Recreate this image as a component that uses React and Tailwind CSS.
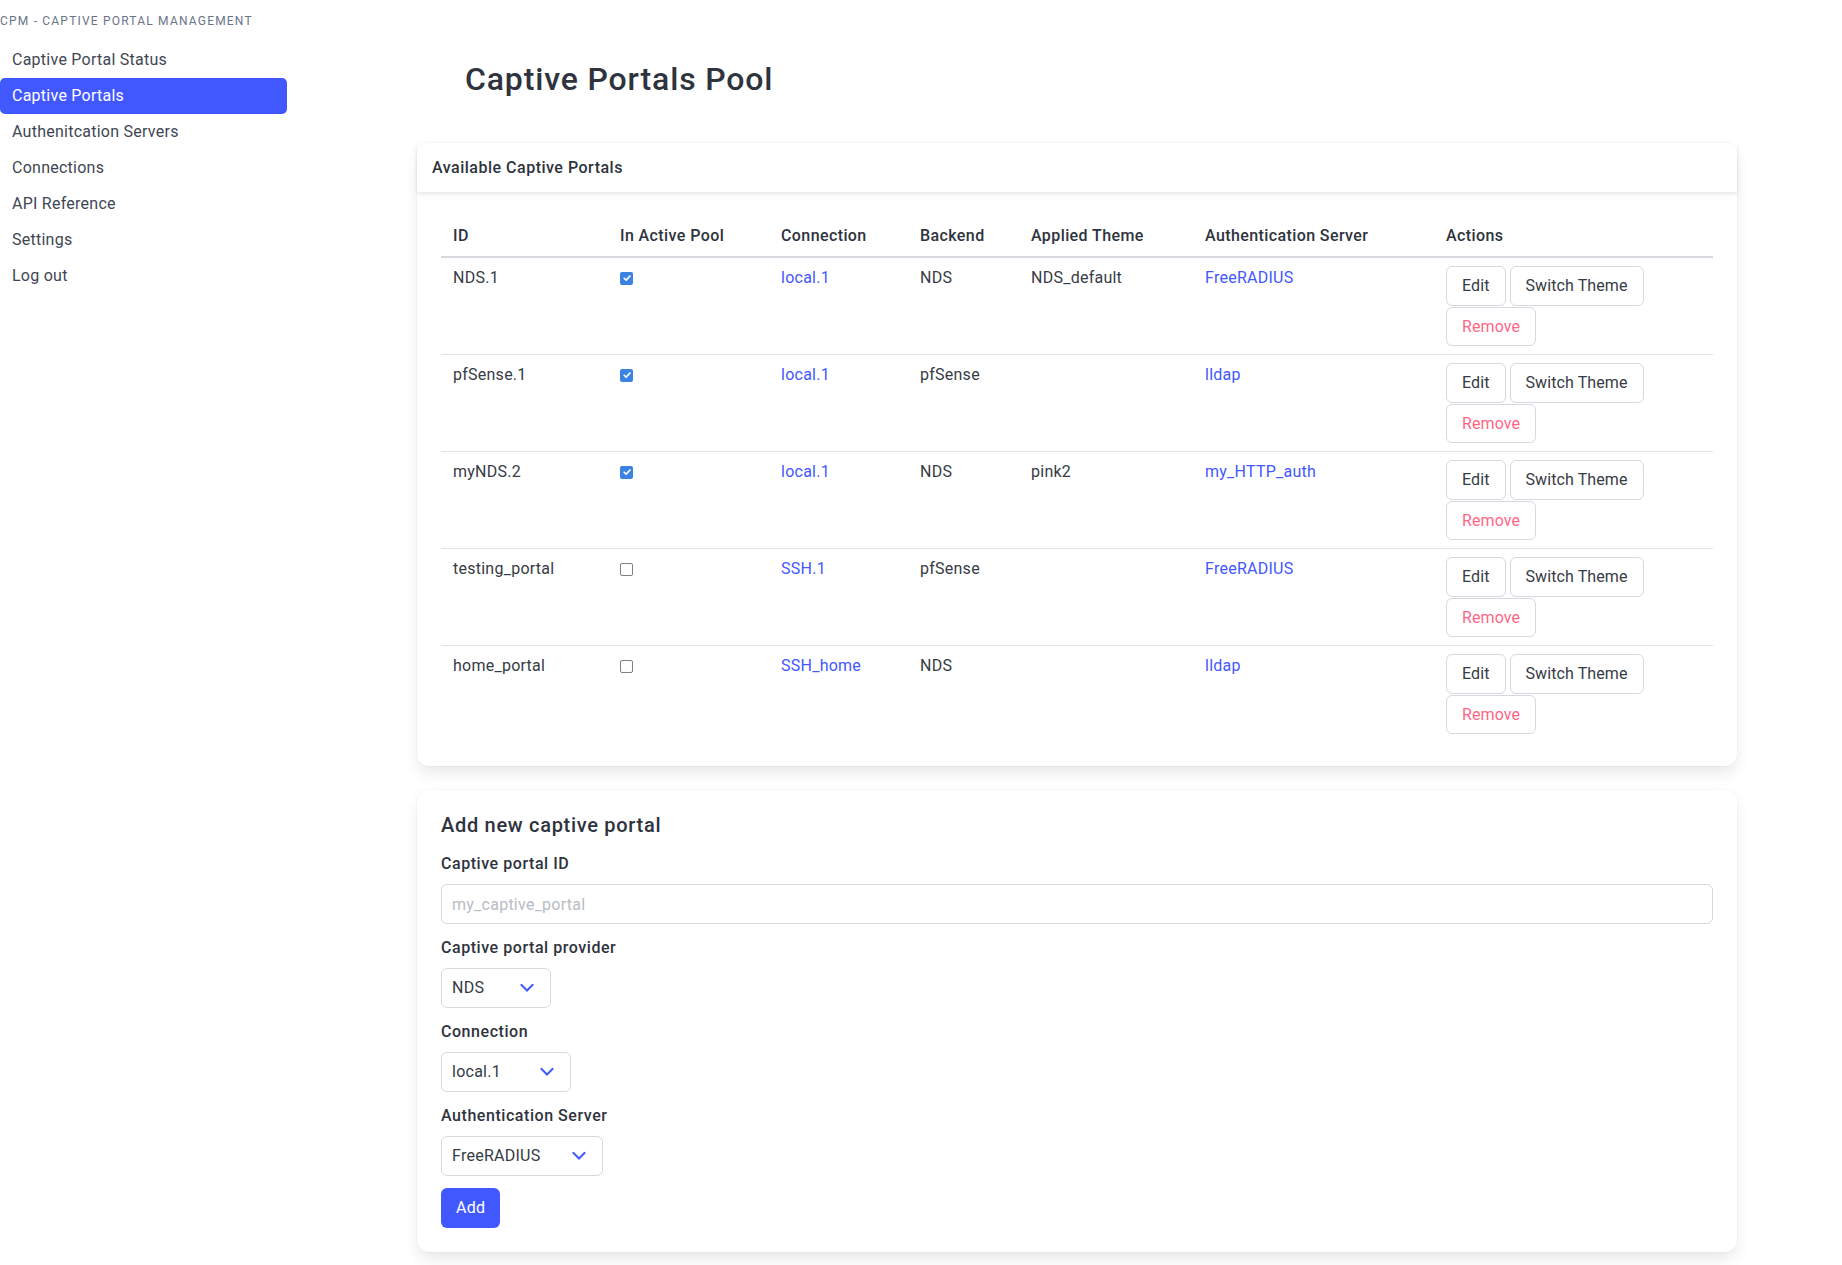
import React from "react";

const rows = [
  { id: "NDS.1", active: true, conn: "local.1", backend: "NDS", theme: "NDS_default", auth: "FreeRADIUS" },
  { id: "pfSense.1", active: true, conn: "local.1", backend: "pfSense", theme: "", auth: "lldap" },
  { id: "myNDS.2", active: true, conn: "local.1", backend: "NDS", theme: "pink2", auth: "my_HTTP_auth" },
  { id: "testing_portal", active: false, conn: "SSH.1", backend: "pfSense", theme: "", auth: "FreeRADIUS" },
  { id: "home_portal", active: false, conn: "SSH_home", backend: "NDS", theme: "", auth: "lldap" },
];

const nav = [
  "Captive Portal Status",
  "Captive Portals",
  "Authenitcation Servers",
  "Connections",
  "API Reference",
  "Settings",
  "Log out",
];

function Checkbox({ checked }) {
  if (checked) {
    return (
      <span className="inline-flex h-[13px] w-[13px] items-center justify-center rounded-[2px] bg-[#3b82e3]">
        <svg viewBox="0 0 12 12" className="h-[10px] w-[10px]">
          <path d="M2.6 6.3 L5 8.6 L9.6 3.6" fill="none" stroke="white" strokeWidth="2" strokeLinecap="round" strokeLinejoin="round" />
        </svg>
      </span>
    );
  }
  return <span className="inline-block h-[13px] w-[13px] rounded-[2px] border border-[#808080] bg-white" />;
}

function Chevron() {
  return (
    <svg viewBox="0 0 14 9" className="h-[9px] w-[14px]">
      <path d="M1.5 1.5 L7 7 L12.5 1.5" fill="none" stroke="#4258ff" strokeWidth="2" strokeLinecap="square" />
    </svg>
  );
}

function Select({ value, width }) {
  return (
    <div
      className="relative flex h-10 items-center rounded-md border border-[#d6d9e0] bg-white pl-[10px] text-[#363b45]"
      style={{ width }}
    >
      <span>{value}</span>
      <span className="absolute right-[16px] top-1/2 flex -translate-y-1/2 items-center">
        <Chevron />
      </span>
    </div>
  );
}

function Btn({ children, danger, className = "" }) {
  return (
    <button
      className={
        "inline-flex items-center justify-center rounded-md border border-[#d6d9e0] bg-white px-[15px] leading-6 tracking-[0.1px] " +
        (danger ? "text-[#ff6685] " : "text-[#363b45] ") +
        className
      }
    >
      {children}
    </button>
  );
}

export default function App() {
  return (
    <div className="flex min-h-[1265px] bg-white font-['Roboto',sans-serif] text-[16px] leading-6 tracking-[0.25px] text-[#3a404d]">
      {/* Sidebar */}
      <aside className="w-[287px] shrink-0 pt-[14px]">
        <div className="text-[12px] leading-[15px] uppercase tracking-[0.1em] text-[#697489]">
          CPM - Captive Portal Management
        </div>
        <ul className="mt-[13px]">
          {nav.map((n) => (
            <li key={n}>
              <a
                className={
                  "flex h-9 items-center rounded-[5px] pl-3 " +
                  (n === "Captive Portals" ? "bg-[#4258ff] text-white" : "text-[#3f4654]")
                }
              >
                {n}
              </a>
            </li>
          ))}
        </ul>
      </aside>

      {/* Main */}
      <main className="flex-1 pl-[130px] pr-[106px] pt-[61px]">
        <h1 className="ml-[48px] text-[32px] font-medium leading-[36px] tracking-[0.85px] text-[#2e333d]">
          Captive Portals Pool
        </h1>

        {/* Card 1 */}
        <div className="mt-[46px] rounded-xl bg-white shadow-[0_8px_16px_-2px_rgba(10,10,10,0.1),0_0_0_1px_rgba(10,10,10,0.02)]">
          <div className="flex h-[49px] items-center px-[15px] font-medium tracking-[0.5px] text-[#2e333d] shadow-[0_2px_4px_rgba(10,10,10,0.1)]">
            Available Captive Portals
          </div>
          <div className="p-6">
            <table className="w-full table-fixed border-collapse">
              <colgroup>
                <col className="w-[167px]" />
                <col className="w-[161px]" />
                <col className="w-[139px]" />
                <col className="w-[111px]" />
                <col className="w-[174px]" />
                <col className="w-[241px]" />
                <col className="w-[279px]" />
              </colgroup>
              <thead>
                <tr className="border-b-2 border-[#d6d9e0]">
                  {["ID", "In Active Pool", "Connection", "Backend", "Applied Theme", "Authentication Server", "Actions"].map((h) => (
                    <th key={h} className="px-3 py-2 text-left font-medium tracking-[0.4px] text-[#2e333d]">
                      {h}
                    </th>
                  ))}
                </tr>
              </thead>
              <tbody>
                {rows.map((r, i) => (
                  <tr key={r.id} className={i < rows.length - 1 ? "border-b border-[#dfe2e7]" : ""}>
                    <td className="px-3 py-2 align-top text-[#363b45]">{r.id}</td>
                    <td className="px-3 py-2 align-top">
                      <div className="flex h-6 items-center">
                        <Checkbox checked={r.active} />
                      </div>
                    </td>
                    <td className="px-3 py-2 align-top text-[#4258ff]">{r.conn}</td>
                    <td className="px-3 py-2 align-top text-[#363b45]">{r.backend}</td>
                    <td className="px-3 py-2 align-top text-[#363b45]">{r.theme}</td>
                    <td className="px-3 py-2 align-top text-[#4258ff]">{r.auth}</td>
                    <td className="px-3 py-2 align-top">
                      <div className="flex flex-col items-start">
                        <div className="flex gap-1">
                          <Btn className="h-10">Edit</Btn>
                          <Btn className="h-10">Switch Theme</Btn>
                        </div>
                        <Btn danger className="mt-px h-[39px]">
                          Remove
                        </Btn>
                      </div>
                    </td>
                  </tr>
                ))}
              </tbody>
            </table>
          </div>
        </div>

        {/* Card 2 */}
        <div className="mt-6 rounded-xl bg-white p-6 shadow-[0_8px_16px_-2px_rgba(10,10,10,0.1),0_0_0_1px_rgba(10,10,10,0.02)]">
          <h2 className="mb-4 text-[20px] font-medium leading-[22px] tracking-[0.7px] text-[#2e333d]">
            Add new captive portal
          </h2>

          <div className="mb-3">
            <label className="mb-2 block font-medium tracking-[0.55px] text-[#2e333d]">Captive portal ID</label>
            <input
              className="h-10 w-full rounded-md border border-[#d6d9e0] px-[10px] tracking-[0.25px] text-[#363b45] outline-none placeholder:text-[#b8bcc4]"
              placeholder="my_captive_portal"
            />
          </div>

          <div className="mb-3">
            <label className="mb-2 block font-medium tracking-[0.55px] text-[#2e333d]">Captive portal provider</label>
            <Select value="NDS" width={110} />
          </div>

          <div className="mb-3">
            <label className="mb-2 block font-medium tracking-[0.55px] text-[#2e333d]">Connection</label>
            <Select value="local.1" width={130} />
          </div>

          <div className="mb-3">
            <label className="mb-2 block font-medium tracking-[0.55px] text-[#2e333d]">Authentication Server</label>
            <Select value="FreeRADIUS" width={162} />
          </div>

          <button className="flex h-10 items-center rounded-md bg-[#4258ff] px-[15px] text-white">Add</button>
        </div>
      </main>
    </div>
  );
}
